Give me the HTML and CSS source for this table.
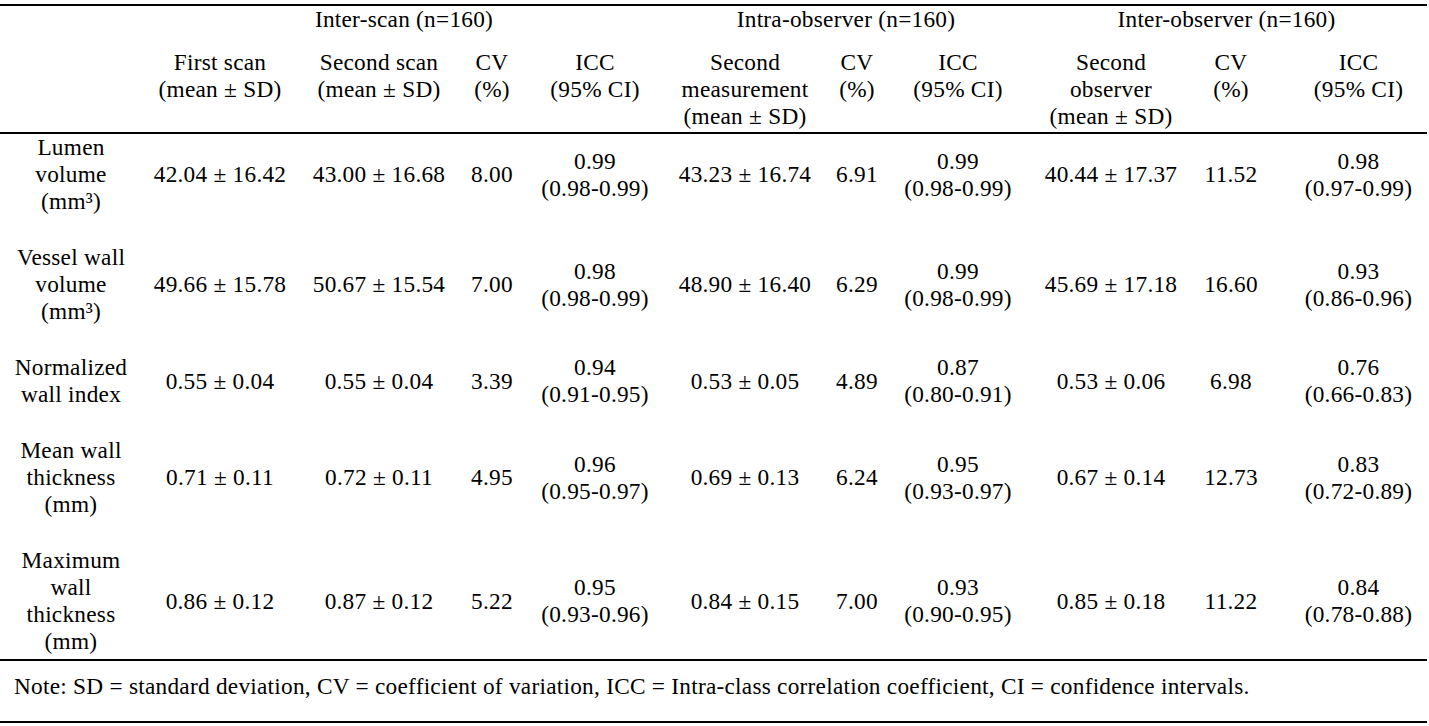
FILE: index.html
```html
<!DOCTYPE html>
<html>
<head>
<meta charset="utf-8">
<link rel="stylesheet" href="styles.css">
</head>
<body>
<div class="page">
<table class="stats">
  <colgroup>
    <col class="c1"><col class="c2"><col class="c3"><col class="c4"><col class="c5"><col class="c6"><col class="c7"><col class="c8"><col class="c9"><col class="c10"><col class="c11">
  </colgroup>
  <thead>
    <tr class="group-row">
      <th></th>
      <th colspan="4">Inter-scan (n=160)</th>
      <th colspan="3">Intra-observer (n=160)</th>
      <th colspan="3" class="last-group">Inter-observer (n=160)</th>
    </tr>
    <tr class="sub-row">
      <th></th>
      <th>First scan<br>(mean ± SD)</th>
      <th>Second scan<br>(mean ± SD)</th>
      <th>CV<br>(%)</th>
      <th>ICC<br>(95% CI)</th>
      <th>Second<br>measurement<br>(mean ± SD)</th>
      <th>CV<br>(%)</th>
      <th>ICC<br>(95% CI)</th>
      <th>Second<br>observer<br>(mean ± SD)</th>
      <th>CV<br>(%)</th>
      <th class="shift">ICC<br>(95% CI)</th>
    </tr>
  </thead>
  <tbody>
    <tr>
      <td>Lumen<br>volume<br>(mm³)</td>
      <td>42.04 ± 16.42</td>
      <td>43.00 ± 16.68</td>
      <td>8.00</td>
      <td>0.99<br>(0.98-0.99)</td>
      <td>43.23 ± 16.74</td>
      <td>6.91</td>
      <td>0.99<br>(0.98-0.99)</td>
      <td>40.44 ± 17.37</td>
      <td>11.52</td>
      <td class="shift">0.98<br>(0.97-0.99)</td>
    </tr>
    <tr>
      <td>Vessel wall<br>volume<br>(mm³)</td>
      <td>49.66 ± 15.78</td>
      <td>50.67 ± 15.54</td>
      <td>7.00</td>
      <td>0.98<br>(0.98-0.99)</td>
      <td>48.90 ± 16.40</td>
      <td>6.29</td>
      <td>0.99<br>(0.98-0.99)</td>
      <td>45.69 ± 17.18</td>
      <td>16.60</td>
      <td class="shift">0.93<br>(0.86-0.96)</td>
    </tr>
    <tr>
      <td>Normalized<br>wall index</td>
      <td>0.55 ± 0.04</td>
      <td>0.55 ± 0.04</td>
      <td>3.39</td>
      <td>0.94<br>(0.91-0.95)</td>
      <td>0.53 ± 0.05</td>
      <td>4.89</td>
      <td>0.87<br>(0.80-0.91)</td>
      <td>0.53 ± 0.06</td>
      <td>6.98</td>
      <td class="shift">0.76<br>(0.66-0.83)</td>
    </tr>
    <tr>
      <td>Mean wall<br>thickness<br>(mm)</td>
      <td>0.71 ± 0.11</td>
      <td>0.72 ± 0.11</td>
      <td>4.95</td>
      <td>0.96<br>(0.95-0.97)</td>
      <td>0.69 ± 0.13</td>
      <td>6.24</td>
      <td>0.95<br>(0.93-0.97)</td>
      <td>0.67 ± 0.14</td>
      <td>12.73</td>
      <td class="shift">0.83<br>(0.72-0.89)</td>
    </tr>
    <tr class="last-row">
      <td>Maximum<br>wall<br>thickness<br>(mm)</td>
      <td>0.86 ± 0.12</td>
      <td>0.87 ± 0.12</td>
      <td>5.22</td>
      <td>0.95<br>(0.93-0.96)</td>
      <td>0.84 ± 0.15</td>
      <td>7.00</td>
      <td>0.93<br>(0.90-0.95)</td>
      <td>0.85 ± 0.18</td>
      <td>11.22</td>
      <td class="shift">0.84<br>(0.78-0.88)</td>
    </tr>
  </tbody>
  <tfoot>
    <tr class="note-row">
      <td colspan="11">Note: SD = standard deviation, CV = coefficient of variation, ICC = Intra-class correlation coefficient, CI = confidence intervals.</td>
    </tr>
  </tfoot>
</table>
</div>
</body>
</html>
```
FILE: styles.css
```css
html, body {
  margin: 0;
  padding: 0;
  background: #ffffff;
}

.page {
  padding-top: 4px;
}

.stats {
  width: 1427px;
  border-collapse: collapse;
  table-layout: fixed;
  font-family: "Liberation Serif", "Times New Roman", serif;
  font-size: 23.3px;
  letter-spacing: 0.25px;
  line-height: 27px;
  color: #000;
}

.c1 { width: 142px; }
.c2 { width: 156px; }
.c3 { width: 162px; }
.c4 { width: 64px; }
.c5 { width: 142px; }
.c6 { width: 158px; }
.c7 { width: 66px; }
.c8 { width: 136px; }
.c9 { width: 170px; }
.c10 { width: 70px; }
.c11 { width: 161px; }

.stats th,
.stats td {
  padding: 0;
  text-align: center;
  font-weight: normal;
  white-space: nowrap;
}

.stats thead tr.group-row th {
  border-top: 2px solid #000;
  padding-top: 0;
  padding-bottom: 16px;
  vertical-align: top;
}

.stats thead tr.sub-row th {
  vertical-align: top;
  padding-bottom: 2px;
  border-bottom: 2px solid #000;
}

.stats tbody td {
  vertical-align: middle;
  padding-top: 0;
  padding-bottom: 29px;
}

.stats tbody tr.last-row td {
  padding-bottom: 4px;
  border-bottom: 2px solid #000;
}

.stats .shift {
  padding-left: 24px;
}

.stats tfoot td {
  text-align: left;
  padding: 12px 0 21px 14px;
  border-bottom: 2px solid #000;
}
```
